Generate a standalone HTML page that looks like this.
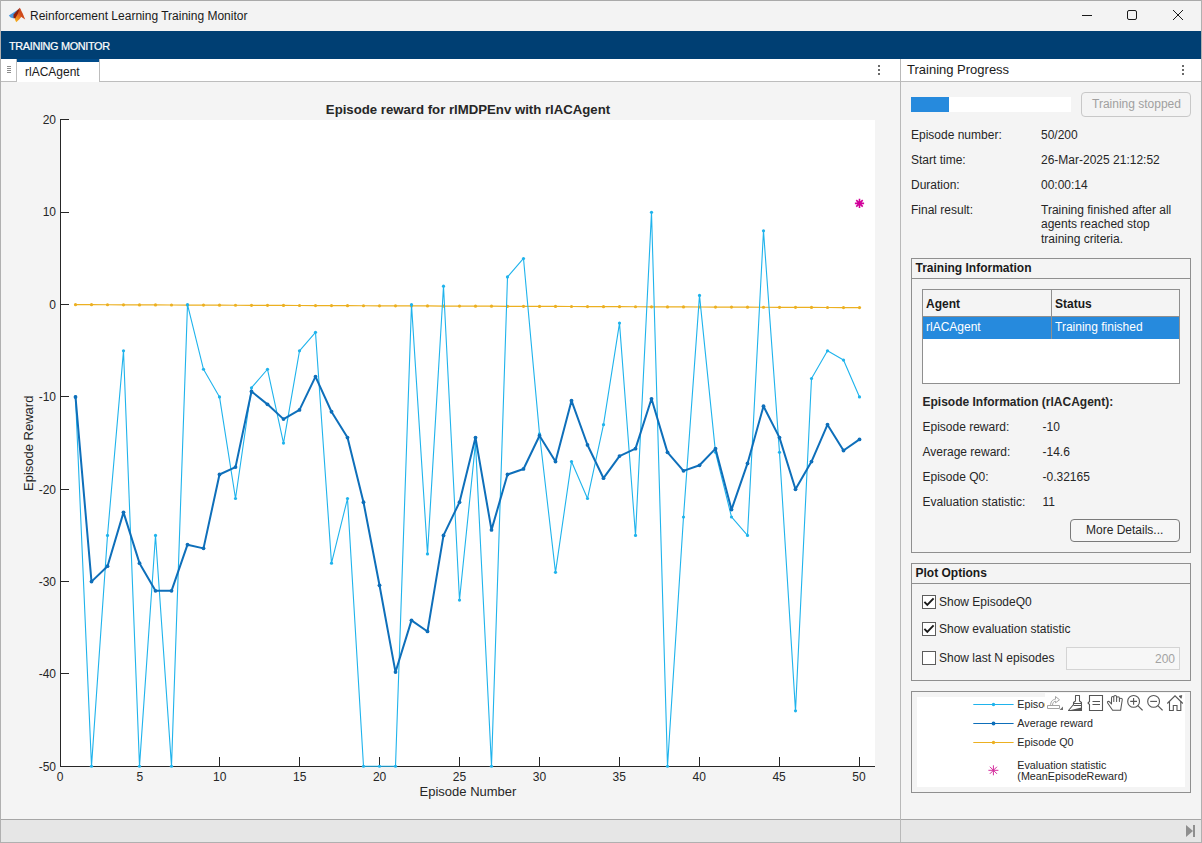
<!DOCTYPE html>
<html><head><meta charset="utf-8">
<style>
html,body{margin:0;padding:0;}
body{width:1202px;height:843px;overflow:hidden;position:relative;background:#f4f4f4;font-family:"Liberation Sans",sans-serif;color:#262626;}
.a{position:absolute;}
.t{position:absolute;white-space:nowrap;font-size:12px;line-height:12px;}
.svg{position:absolute;left:0;top:0;}
</style></head><body>
<!-- title bar -->
<div class="a" style="left:0;top:0;width:1202px;height:31px;background:#f3f3f3;"></div>
<div class="a" style="left:0;top:0;width:1202px;height:1px;background:#a9a9a9;"></div>
<div class="t" style="left:30px;top:10px;font-size:12px;color:#1a1a1a;">Reinforcement Learning Training Monitor</div>
<!-- blue toolstrip -->
<div class="a" style="left:0;top:31px;width:1202px;height:28px;background:#003f73;"></div>
<div class="t" style="left:9px;top:40.5px;font-size:10.9px;line-height:11px;letter-spacing:-0.35px;color:#ffffff;-webkit-text-stroke:0.2px #fff;">TRAINING MONITOR</div>
<!-- left tab strip -->
<div class="a" style="left:0;top:59px;width:900px;height:22px;background:#fff;"></div>
<div class="a" style="left:0;top:81px;width:17px;height:1px;background:#bdbdbd;"></div>
<div class="a" style="left:16px;top:59px;width:1px;height:23px;background:#bdbdbd;"></div>
<div class="a" style="left:7px;top:66px;width:4px;height:1px;background:#8c8c8c;"></div>
<div class="a" style="left:7px;top:68px;width:4px;height:1px;background:#8c8c8c;"></div>
<div class="a" style="left:7px;top:70px;width:4px;height:1px;background:#8c8c8c;"></div>
<div class="a" style="left:7px;top:72px;width:4px;height:1px;background:#8c8c8c;"></div>
<div class="a" style="left:17px;top:59px;width:82px;height:3px;background:#004b8a;"></div>
<div class="a" style="left:17px;top:62px;width:82px;height:20px;background:#fff;"></div>
<div class="t" style="left:25px;top:65.8px;color:#1a1a1a;">rlACAgent</div>
<div class="a" style="left:99px;top:59px;width:1px;height:23px;background:#bdbdbd;"></div>
<div class="a" style="left:99px;top:81px;width:801px;height:1px;background:#bdbdbd;"></div>
<div class="a" style="left:878px;top:65px;width:2px;height:2px;background:#6a6a6a;"></div>
<div class="a" style="left:878px;top:69px;width:2px;height:2px;background:#6a6a6a;"></div>
<div class="a" style="left:878px;top:73px;width:2px;height:2px;background:#6a6a6a;"></div>
<!-- plot -->
<svg class="svg" width="1202" height="843"><rect x="60" y="120" width="815" height="647" fill="#fff"/><path d="M60.5,119V767M60,766.5H875" stroke="#262626" stroke-width="1" fill="none"/><path d="M61,119.5H69M61,212.5H69M61,304.5H69M61,396.5H69M61,489.5H69M61,581.5H69M61,673.5H69M139.5,766V757M219.5,766V757M299.5,766V757M379.5,766V757M459.5,766V757M539.5,766V757M619.5,766V757M699.5,766V757M779.5,766V757M859.5,766V757" stroke="#262626" stroke-width="1" fill="none"/><polyline points="75.50,304.64 91.50,304.70 107.50,304.76 123.50,304.82 139.50,304.88 155.50,304.94 171.50,305.00 187.50,305.06 203.50,305.12 219.50,305.19 235.50,305.25 251.50,305.31 267.50,305.37 283.50,305.43 299.50,305.49 315.50,305.55 331.50,305.61 347.50,305.67 363.50,305.73 379.50,305.79 395.50,305.85 411.50,305.91 427.50,305.97 443.50,306.03 459.50,306.09 475.50,306.16 491.50,306.22 507.50,306.28 523.50,306.34 539.50,306.40 555.50,306.46 571.50,306.52 587.50,306.58 603.50,306.64 619.50,306.70 635.50,306.76 651.50,306.82 667.50,306.88 683.50,306.94 699.50,307.00 715.50,307.06 731.50,307.12 747.50,307.19 763.50,307.25 779.50,307.31 795.50,307.37 811.50,307.43 827.50,307.49 843.50,307.55 859.50,307.61" fill="none" stroke="#ecb021" stroke-width="1.2"/><circle cx="75.50" cy="304.64" r="1.6" fill="#ecb021"/><circle cx="91.50" cy="304.70" r="1.6" fill="#ecb021"/><circle cx="107.50" cy="304.76" r="1.6" fill="#ecb021"/><circle cx="123.50" cy="304.82" r="1.6" fill="#ecb021"/><circle cx="139.50" cy="304.88" r="1.6" fill="#ecb021"/><circle cx="155.50" cy="304.94" r="1.6" fill="#ecb021"/><circle cx="171.50" cy="305.00" r="1.6" fill="#ecb021"/><circle cx="187.50" cy="305.06" r="1.6" fill="#ecb021"/><circle cx="203.50" cy="305.12" r="1.6" fill="#ecb021"/><circle cx="219.50" cy="305.19" r="1.6" fill="#ecb021"/><circle cx="235.50" cy="305.25" r="1.6" fill="#ecb021"/><circle cx="251.50" cy="305.31" r="1.6" fill="#ecb021"/><circle cx="267.50" cy="305.37" r="1.6" fill="#ecb021"/><circle cx="283.50" cy="305.43" r="1.6" fill="#ecb021"/><circle cx="299.50" cy="305.49" r="1.6" fill="#ecb021"/><circle cx="315.50" cy="305.55" r="1.6" fill="#ecb021"/><circle cx="331.50" cy="305.61" r="1.6" fill="#ecb021"/><circle cx="347.50" cy="305.67" r="1.6" fill="#ecb021"/><circle cx="363.50" cy="305.73" r="1.6" fill="#ecb021"/><circle cx="379.50" cy="305.79" r="1.6" fill="#ecb021"/><circle cx="395.50" cy="305.85" r="1.6" fill="#ecb021"/><circle cx="411.50" cy="305.91" r="1.6" fill="#ecb021"/><circle cx="427.50" cy="305.97" r="1.6" fill="#ecb021"/><circle cx="443.50" cy="306.03" r="1.6" fill="#ecb021"/><circle cx="459.50" cy="306.09" r="1.6" fill="#ecb021"/><circle cx="475.50" cy="306.16" r="1.6" fill="#ecb021"/><circle cx="491.50" cy="306.22" r="1.6" fill="#ecb021"/><circle cx="507.50" cy="306.28" r="1.6" fill="#ecb021"/><circle cx="523.50" cy="306.34" r="1.6" fill="#ecb021"/><circle cx="539.50" cy="306.40" r="1.6" fill="#ecb021"/><circle cx="555.50" cy="306.46" r="1.6" fill="#ecb021"/><circle cx="571.50" cy="306.52" r="1.6" fill="#ecb021"/><circle cx="587.50" cy="306.58" r="1.6" fill="#ecb021"/><circle cx="603.50" cy="306.64" r="1.6" fill="#ecb021"/><circle cx="619.50" cy="306.70" r="1.6" fill="#ecb021"/><circle cx="635.50" cy="306.76" r="1.6" fill="#ecb021"/><circle cx="651.50" cy="306.82" r="1.6" fill="#ecb021"/><circle cx="667.50" cy="306.88" r="1.6" fill="#ecb021"/><circle cx="683.50" cy="306.94" r="1.6" fill="#ecb021"/><circle cx="699.50" cy="307.00" r="1.6" fill="#ecb021"/><circle cx="715.50" cy="307.06" r="1.6" fill="#ecb021"/><circle cx="731.50" cy="307.12" r="1.6" fill="#ecb021"/><circle cx="747.50" cy="307.19" r="1.6" fill="#ecb021"/><circle cx="763.50" cy="307.25" r="1.6" fill="#ecb021"/><circle cx="779.50" cy="307.31" r="1.6" fill="#ecb021"/><circle cx="795.50" cy="307.37" r="1.6" fill="#ecb021"/><circle cx="811.50" cy="307.43" r="1.6" fill="#ecb021"/><circle cx="827.50" cy="307.49" r="1.6" fill="#ecb021"/><circle cx="843.50" cy="307.55" r="1.6" fill="#ecb021"/><circle cx="859.50" cy="307.61" r="1.6" fill="#ecb021"/><polyline points="75.50,396.96 91.50,766.24 107.50,535.44 123.50,350.80 139.50,766.24 155.50,535.44 171.50,766.24 187.50,304.64 203.50,369.26 219.50,396.96 235.50,498.51 251.50,387.73 267.50,369.26 283.50,443.12 299.50,350.80 315.50,332.34 331.50,563.14 347.50,498.51 363.50,766.24 379.50,766.24 395.50,766.24 411.50,304.64 427.50,553.90 443.50,286.18 459.50,600.06 475.50,443.12 491.50,766.24 507.50,276.94 523.50,258.48 539.50,433.89 555.50,572.37 571.50,461.58 587.50,498.51 603.50,424.66 619.50,323.10 635.50,535.44 651.50,212.32 667.50,766.24 683.50,516.98 699.50,295.41 715.50,452.35 731.50,516.98 747.50,535.44 763.50,230.78 779.50,452.35 795.50,710.85 811.50,378.50 827.50,350.80 843.50,360.03 859.50,396.96" fill="none" stroke="#1fb3ec" stroke-width="1.1" stroke-linejoin="round"/><circle cx="75.50" cy="396.96" r="1.6" fill="#1fb3ec"/><circle cx="91.50" cy="766.24" r="1.6" fill="#1fb3ec"/><circle cx="107.50" cy="535.44" r="1.6" fill="#1fb3ec"/><circle cx="123.50" cy="350.80" r="1.6" fill="#1fb3ec"/><circle cx="139.50" cy="766.24" r="1.6" fill="#1fb3ec"/><circle cx="155.50" cy="535.44" r="1.6" fill="#1fb3ec"/><circle cx="171.50" cy="766.24" r="1.6" fill="#1fb3ec"/><circle cx="187.50" cy="304.64" r="1.6" fill="#1fb3ec"/><circle cx="203.50" cy="369.26" r="1.6" fill="#1fb3ec"/><circle cx="219.50" cy="396.96" r="1.6" fill="#1fb3ec"/><circle cx="235.50" cy="498.51" r="1.6" fill="#1fb3ec"/><circle cx="251.50" cy="387.73" r="1.6" fill="#1fb3ec"/><circle cx="267.50" cy="369.26" r="1.6" fill="#1fb3ec"/><circle cx="283.50" cy="443.12" r="1.6" fill="#1fb3ec"/><circle cx="299.50" cy="350.80" r="1.6" fill="#1fb3ec"/><circle cx="315.50" cy="332.34" r="1.6" fill="#1fb3ec"/><circle cx="331.50" cy="563.14" r="1.6" fill="#1fb3ec"/><circle cx="347.50" cy="498.51" r="1.6" fill="#1fb3ec"/><circle cx="363.50" cy="766.24" r="1.6" fill="#1fb3ec"/><circle cx="379.50" cy="766.24" r="1.6" fill="#1fb3ec"/><circle cx="395.50" cy="766.24" r="1.6" fill="#1fb3ec"/><circle cx="411.50" cy="304.64" r="1.6" fill="#1fb3ec"/><circle cx="427.50" cy="553.90" r="1.6" fill="#1fb3ec"/><circle cx="443.50" cy="286.18" r="1.6" fill="#1fb3ec"/><circle cx="459.50" cy="600.06" r="1.6" fill="#1fb3ec"/><circle cx="475.50" cy="443.12" r="1.6" fill="#1fb3ec"/><circle cx="491.50" cy="766.24" r="1.6" fill="#1fb3ec"/><circle cx="507.50" cy="276.94" r="1.6" fill="#1fb3ec"/><circle cx="523.50" cy="258.48" r="1.6" fill="#1fb3ec"/><circle cx="539.50" cy="433.89" r="1.6" fill="#1fb3ec"/><circle cx="555.50" cy="572.37" r="1.6" fill="#1fb3ec"/><circle cx="571.50" cy="461.58" r="1.6" fill="#1fb3ec"/><circle cx="587.50" cy="498.51" r="1.6" fill="#1fb3ec"/><circle cx="603.50" cy="424.66" r="1.6" fill="#1fb3ec"/><circle cx="619.50" cy="323.10" r="1.6" fill="#1fb3ec"/><circle cx="635.50" cy="535.44" r="1.6" fill="#1fb3ec"/><circle cx="651.50" cy="212.32" r="1.6" fill="#1fb3ec"/><circle cx="667.50" cy="766.24" r="1.6" fill="#1fb3ec"/><circle cx="683.50" cy="516.98" r="1.6" fill="#1fb3ec"/><circle cx="699.50" cy="295.41" r="1.6" fill="#1fb3ec"/><circle cx="715.50" cy="452.35" r="1.6" fill="#1fb3ec"/><circle cx="731.50" cy="516.98" r="1.6" fill="#1fb3ec"/><circle cx="747.50" cy="535.44" r="1.6" fill="#1fb3ec"/><circle cx="763.50" cy="230.78" r="1.6" fill="#1fb3ec"/><circle cx="779.50" cy="452.35" r="1.6" fill="#1fb3ec"/><circle cx="795.50" cy="710.85" r="1.6" fill="#1fb3ec"/><circle cx="811.50" cy="378.50" r="1.6" fill="#1fb3ec"/><circle cx="827.50" cy="350.80" r="1.6" fill="#1fb3ec"/><circle cx="843.50" cy="360.03" r="1.6" fill="#1fb3ec"/><circle cx="859.50" cy="396.96" r="1.6" fill="#1fb3ec"/><polyline points="75.50,396.96 91.50,581.60 107.50,566.21 123.50,512.36 139.50,563.14 155.50,590.83 171.50,590.83 187.50,544.67 203.50,548.36 219.50,474.51 235.50,467.12 251.50,391.42 267.50,404.35 283.50,419.12 299.50,409.88 315.50,376.65 331.50,411.73 347.50,437.58 363.50,502.20 379.50,585.29 395.50,672.07 411.50,620.37 427.50,631.45 443.50,535.44 459.50,502.20 475.50,437.58 491.50,529.90 507.50,474.51 523.50,468.97 539.50,435.73 555.50,461.58 571.50,400.65 587.50,444.97 603.50,478.20 619.50,456.04 635.50,448.66 651.50,398.81 667.50,452.35 683.50,470.82 699.50,465.28 715.50,448.66 731.50,509.59 747.50,463.43 763.50,406.19 779.50,437.58 795.50,489.28 811.50,461.58 827.50,424.66 843.50,450.51 859.50,439.43" fill="none" stroke="#0e6fba" stroke-width="2.0" stroke-linejoin="round"/><circle cx="75.50" cy="396.96" r="1.9" fill="#0e6fba"/><circle cx="91.50" cy="581.60" r="1.9" fill="#0e6fba"/><circle cx="107.50" cy="566.21" r="1.9" fill="#0e6fba"/><circle cx="123.50" cy="512.36" r="1.9" fill="#0e6fba"/><circle cx="139.50" cy="563.14" r="1.9" fill="#0e6fba"/><circle cx="155.50" cy="590.83" r="1.9" fill="#0e6fba"/><circle cx="171.50" cy="590.83" r="1.9" fill="#0e6fba"/><circle cx="187.50" cy="544.67" r="1.9" fill="#0e6fba"/><circle cx="203.50" cy="548.36" r="1.9" fill="#0e6fba"/><circle cx="219.50" cy="474.51" r="1.9" fill="#0e6fba"/><circle cx="235.50" cy="467.12" r="1.9" fill="#0e6fba"/><circle cx="251.50" cy="391.42" r="1.9" fill="#0e6fba"/><circle cx="267.50" cy="404.35" r="1.9" fill="#0e6fba"/><circle cx="283.50" cy="419.12" r="1.9" fill="#0e6fba"/><circle cx="299.50" cy="409.88" r="1.9" fill="#0e6fba"/><circle cx="315.50" cy="376.65" r="1.9" fill="#0e6fba"/><circle cx="331.50" cy="411.73" r="1.9" fill="#0e6fba"/><circle cx="347.50" cy="437.58" r="1.9" fill="#0e6fba"/><circle cx="363.50" cy="502.20" r="1.9" fill="#0e6fba"/><circle cx="379.50" cy="585.29" r="1.9" fill="#0e6fba"/><circle cx="395.50" cy="672.07" r="1.9" fill="#0e6fba"/><circle cx="411.50" cy="620.37" r="1.9" fill="#0e6fba"/><circle cx="427.50" cy="631.45" r="1.9" fill="#0e6fba"/><circle cx="443.50" cy="535.44" r="1.9" fill="#0e6fba"/><circle cx="459.50" cy="502.20" r="1.9" fill="#0e6fba"/><circle cx="475.50" cy="437.58" r="1.9" fill="#0e6fba"/><circle cx="491.50" cy="529.90" r="1.9" fill="#0e6fba"/><circle cx="507.50" cy="474.51" r="1.9" fill="#0e6fba"/><circle cx="523.50" cy="468.97" r="1.9" fill="#0e6fba"/><circle cx="539.50" cy="435.73" r="1.9" fill="#0e6fba"/><circle cx="555.50" cy="461.58" r="1.9" fill="#0e6fba"/><circle cx="571.50" cy="400.65" r="1.9" fill="#0e6fba"/><circle cx="587.50" cy="444.97" r="1.9" fill="#0e6fba"/><circle cx="603.50" cy="478.20" r="1.9" fill="#0e6fba"/><circle cx="619.50" cy="456.04" r="1.9" fill="#0e6fba"/><circle cx="635.50" cy="448.66" r="1.9" fill="#0e6fba"/><circle cx="651.50" cy="398.81" r="1.9" fill="#0e6fba"/><circle cx="667.50" cy="452.35" r="1.9" fill="#0e6fba"/><circle cx="683.50" cy="470.82" r="1.9" fill="#0e6fba"/><circle cx="699.50" cy="465.28" r="1.9" fill="#0e6fba"/><circle cx="715.50" cy="448.66" r="1.9" fill="#0e6fba"/><circle cx="731.50" cy="509.59" r="1.9" fill="#0e6fba"/><circle cx="747.50" cy="463.43" r="1.9" fill="#0e6fba"/><circle cx="763.50" cy="406.19" r="1.9" fill="#0e6fba"/><circle cx="779.50" cy="437.58" r="1.9" fill="#0e6fba"/><circle cx="795.50" cy="489.28" r="1.9" fill="#0e6fba"/><circle cx="811.50" cy="461.58" r="1.9" fill="#0e6fba"/><circle cx="827.50" cy="424.66" r="1.9" fill="#0e6fba"/><circle cx="843.50" cy="450.51" r="1.9" fill="#0e6fba"/><circle cx="859.50" cy="439.43" r="1.9" fill="#0e6fba"/><path d="M854.90,203.40L864.10,203.40M856.25,200.15L862.75,206.65M859.50,198.80L859.50,208.00M862.75,200.15L856.25,206.65" stroke="#d1009a" stroke-width="1.6" fill="none"/><g font-family="Liberation Sans" font-size="12" fill="#262626"><text x="56" y="123.8" text-anchor="end">20</text><text x="56" y="216.2" text-anchor="end">10</text><text x="56" y="308.7" text-anchor="end">0</text><text x="56" y="401.1" text-anchor="end">-10</text><text x="56" y="493.5" text-anchor="end">-20</text><text x="56" y="586.0" text-anchor="end">-30</text><text x="56" y="678.4" text-anchor="end">-40</text><text x="56" y="770.8" text-anchor="end">-50</text><text x="60.0" y="781" text-anchor="middle">0</text><text x="139.9" y="781" text-anchor="middle">5</text><text x="219.8" y="781" text-anchor="middle">10</text><text x="299.7" y="781" text-anchor="middle">15</text><text x="379.6" y="781" text-anchor="middle">20</text><text x="459.5" y="781" text-anchor="middle">25</text><text x="539.4" y="781" text-anchor="middle">30</text><text x="619.3" y="781" text-anchor="middle">35</text><text x="699.2" y="781" text-anchor="middle">40</text><text x="779.1" y="781" text-anchor="middle">45</text><text x="859.0" y="781" text-anchor="middle">50</text></g><text x="468" y="795.5" text-anchor="middle" font-family="Liberation Sans" font-size="13" fill="#262626">Episode Number</text><text transform="translate(32.6,443.3) rotate(-90)" x="0" y="0" text-anchor="middle" font-family="Liberation Sans" font-size="13" fill="#262626">Episode Reward</text><text x="468" y="114" text-anchor="middle" font-family="Liberation Sans" font-size="13.2" font-weight="bold" fill="#262626">Episode reward for rlMDPEnv with rlACAgent</text></svg>
<!-- divider -->
<div class="a" style="left:900px;top:59px;width:1px;height:784px;background:#b9b9b9;"></div>
<!-- right panel header -->
<div class="a" style="left:901px;top:59px;width:300px;height:22px;background:#fff;"></div>
<div class="a" style="left:901px;top:81px;width:300px;height:1px;background:#bdbdbd;"></div>
<div class="t" style="left:907px;top:63.4px;font-size:13px;line-height:13px;color:#1a1a1a;">Training Progress</div>
<div class="a" style="left:1182px;top:65px;width:2px;height:2px;background:#6a6a6a;"></div>
<div class="a" style="left:1182px;top:69px;width:2px;height:2px;background:#6a6a6a;"></div>
<div class="a" style="left:1182px;top:73px;width:2px;height:2px;background:#6a6a6a;"></div>
<!-- progress -->
<div class="a" style="left:911px;top:97px;width:160px;height:15px;background:#fff;"></div>
<div class="a" style="left:911px;top:97px;width:38px;height:15px;background:#268add;"></div>
<div class="a" style="left:1081px;top:92px;width:108px;height:23px;border:1px solid #c8c8c8;border-radius:4px;background:#f4f4f4;"></div>
<div class="t" style="left:1092px;top:98px;color:#a0a0a0;">Training stopped</div>
<!-- info rows -->
<div class="t" style="left:911px;top:129.2px;">Episode number:</div>
<div class="t" style="left:1041px;top:129.2px;">50/200</div>
<div class="t" style="left:911px;top:154.2px;">Start time:</div>
<div class="t" style="left:1041px;top:154.2px;">26-Mar-2025 21:12:52</div>
<div class="t" style="left:911px;top:179.2px;">Duration:</div>
<div class="t" style="left:1041px;top:179.2px;">00:00:14</div>
<div class="t" style="left:911px;top:204px;">Final result:</div>
<div class="t" style="left:1041px;top:203.5px;">Training finished after all</div>
<div class="t" style="left:1041px;top:218.3px;">agents reached stop</div>
<div class="t" style="left:1041px;top:233.1px;">training criteria.</div>
<!-- Training Information panel -->
<div class="a" style="left:911px;top:258px;width:278px;height:293px;border:1px solid #8f8f8f;"></div>
<div class="a" style="left:912px;top:278px;width:278px;height:1px;background:#8f8f8f;"></div>
<div class="t" style="left:915.5px;top:262px;font-weight:bold;color:#1a1a1a;">Training Information</div>
<div class="a" style="left:922px;top:289px;width:256px;height:93px;border:1px solid #8f8f8f;background:#fff;"></div>
<div class="a" style="left:923px;top:290px;width:256px;height:26px;background:#f4f4f4;"></div>
<div class="a" style="left:923px;top:316px;width:256px;height:1px;background:#8f8f8f;"></div>
<div class="a" style="left:923px;top:317px;width:256px;height:22px;background:#268add;"></div>
<div class="a" style="left:1051px;top:290px;width:1px;height:49px;background:#8f8f8f;"></div>
<div class="t" style="left:926px;top:297.5px;font-weight:bold;color:#1a1a1a;">Agent</div>
<div class="t" style="left:1055px;top:297.5px;font-weight:bold;color:#1a1a1a;">Status</div>
<div class="t" style="left:926px;top:320.8px;color:#fff;">rlACAgent</div>
<div class="t" style="left:1055px;top:320.8px;color:#fff;">Training finished</div>
<div class="t" style="left:922.5px;top:396.2px;font-weight:bold;">Episode Information (rlACAgent):</div>
<div class="t" style="left:922.5px;top:421px;">Episode reward:</div>
<div class="t" style="left:1042.5px;top:421px;">-10</div>
<div class="t" style="left:922.5px;top:446px;">Average reward:</div>
<div class="t" style="left:1042.5px;top:446px;">-14.6</div>
<div class="t" style="left:922.5px;top:471px;">Episode Q0:</div>
<div class="t" style="left:1042.5px;top:471px;">-0.32165</div>
<div class="t" style="left:922.5px;top:496px;">Evaluation statistic:</div>
<div class="t" style="left:1042.5px;top:496px;">11</div>
<div class="a" style="left:1070px;top:519px;width:108px;height:21px;border:1px solid #7a7a7a;border-radius:4px;background:#f6f6f6;"></div>
<div class="t" style="left:1086px;top:524px;">More Details...</div>
<!-- Plot Options -->
<div class="a" style="left:911px;top:563px;width:278px;height:116px;border:1px solid #8f8f8f;"></div>
<div class="a" style="left:912px;top:583px;width:278px;height:1px;background:#8f8f8f;"></div>
<div class="t" style="left:915.5px;top:567px;font-weight:bold;color:#1a1a1a;">Plot Options</div>
<div class="a" style="left:922px;top:595px;width:12px;height:12px;border:1px solid #5c5c5c;background:#fff;"></div>
<div class="a" style="left:922px;top:622px;width:12px;height:12px;border:1px solid #5c5c5c;background:#fff;"></div>
<div class="a" style="left:922px;top:651px;width:12px;height:12px;border:1px solid #5c5c5c;background:#fff;"></div>
<svg class="svg" width="1202" height="843" style="pointer-events:none">
<path d="M924.4,601.8L927.3,604.8L933.6,598.3" stroke="#1a1a1a" stroke-width="1.9" fill="none"/>
<path d="M924.4,628.8L927.3,631.8L933.6,625.3" stroke="#1a1a1a" stroke-width="1.9" fill="none"/>
</svg>
<div class="t" style="left:939px;top:596.3px;">Show EpisodeQ0</div>
<div class="t" style="left:939px;top:623.2px;">Show evaluation statistic</div>
<div class="t" style="left:939px;top:652.1px;">Show last N episodes</div>
<div class="a" style="left:1066px;top:647px;width:112px;height:21px;border:1px solid #d4d4d4;background:#f7f7f7;"></div>
<div class="t" style="left:1155px;top:652.8px;color:#a3a3a3;">200</div>
<!-- legend panel -->
<div class="a" style="left:911px;top:691px;width:278px;height:100px;border:1px solid #8f8f8f;"></div>
<div class="a" style="left:917px;top:697px;width:268px;height:90px;background:#fff;"></div>
<svg class="svg" width="1202" height="843">
<path d="M973.3,704.5H1013.6" stroke="#1fb3ec" stroke-width="1.2"/><circle cx="993.5" cy="704.5" r="1.7" fill="#1fb3ec"/>
<path d="M973.3,723.5H1013.6" stroke="#0e6fba" stroke-width="1.2"/><circle cx="993.5" cy="723.5" r="1.9" fill="#0e6fba"/>
<path d="M973.3,742.5H1013.6" stroke="#ecb021" stroke-width="1.2"/><circle cx="993.5" cy="742.5" r="1.7" fill="#ecb021"/>
<path d="M988.40,770.30L998.40,770.30M989.86,766.76L996.94,773.84M993.40,765.30L993.40,775.30M996.94,766.76L989.86,773.84" stroke="#d42c9c" stroke-width="1" fill="none"/>
<g font-family="Liberation Sans" font-size="10.75" fill="#262626">
<text x="1017.3" y="708.1">Episode reward</text>
<text x="1017.3" y="727.2">Average reward</text>
<text x="1017.3" y="745.8">Episode Q0</text>
<text x="1017.3" y="769.2">Evaluation statistic</text>
<text x="1017.3" y="780.3">(MeanEpisodeReward)</text>
</g>
<rect x="1045" y="693" width="140" height="21" fill="#ffffff"/>
<g stroke="#a3a3a3" stroke-width="1" fill="none" stroke-linejoin="round"><rect x="1047.5" y="705.5" width="12" height="3"/><path d="M1050.5,706C1050.5,701.5 1052.5,699.5 1055.5,699.2V696.5L1059.5,699.8L1055.5,702.8V701.2C1053.5,701.4 1052.5,703 1052.5,705.5"/></g><path d="M1059.5,710L1063,706.5V710Z" fill="#707070"/>
<g stroke="#555555" stroke-width="1.05" fill="none"><path d="M1075.5,695.5H1079.5V701L1081.5,702.5V710.5H1068.5L1073.5,704.5V702.5L1075.5,701Z" stroke-linejoin="round"/><path d="M1073.5,703.5H1081.5M1073.5,705.5H1081.5"/></g><path d="M1068.5,710.5L1081.5,707.5V711H1068.5Z" fill="#555555"/>
<g stroke="#555555" stroke-width="1.1" fill="none"><path d="M1089.5,695.5H1102.5V710.5H1089.5V704.5L1088,703L1089.5,701.5V695.5Z"/><path d="M1092.5,701.5H1100M1092.5,704.5H1100"/></g>
<g stroke="#555555" stroke-width="1.05" fill="none" stroke-linejoin="round" stroke-linecap="round"><path d="M1112.6,710.3L1107.5,702.8C1107,701.8 1108.5,700.8 1109.5,701.8L1111.5,704V698C1111.5,696 1113.8,696 1113.8,698V701.5V697C1113.8,695 1116.6,695 1116.6,697V701.5V698C1116.6,696.2 1119.4,696.2 1119.4,698V701.5V699.5C1119.4,697.8 1122.3,697.8 1122.3,699.5L1120.6,710.3Z"/></g>
<g stroke="#555555" stroke-width="1.1" fill="none"><circle cx="1133.6" cy="701.4" r="5.9"/><path d="M1137.8,705.6L1142.6,710.4" stroke-width="1.3"/><path d="M1130.2,701.4H1137M1133.6,698V704.8"/></g>
<g stroke="#555555" stroke-width="1.1" fill="none"><circle cx="1153.6" cy="701.4" r="5.9"/><path d="M1157.8,705.6L1162.6,710.4" stroke-width="1.3"/><path d="M1150.2,701.4H1157"/></g>
<g stroke="#555555" stroke-width="1.1" fill="none" stroke-linejoin="miter"><path d="M1167.3,703.5L1175,695.8L1182.8,703.5"/><path d="M1169.5,701.5V710.5H1173.3V705.5H1177V710.5H1180.8V701.5"/></g><path d="M1179,696.2L1181.8,695.5L1181.2,698.3Z" fill="#555555" stroke="#555555" stroke-width="0.8"/>
</svg>
<!-- status bar -->
<div class="a" style="left:0;top:819px;width:1202px;height:24px;background:#e6e6e6;"></div>
<div class="a" style="left:0;top:819px;width:1202px;height:1px;background:#a6a6a6;"></div>
<div class="a" style="left:900px;top:819px;width:1px;height:24px;background:#b9b9b9;"></div>
<!-- window borders -->
<div class="a" style="left:0;top:0;width:1px;height:843px;background:#b0b0b0;"></div>
<div class="a" style="left:1201px;top:0;width:1px;height:843px;background:#b0b0b0;"></div>
<svg class="svg" width="1202" height="843">
<defs><linearGradient id="mg" x1="0" y1="1" x2="0.3" y2="0"><stop offset="0" stop-color="#f7c021"/><stop offset="0.55" stop-color="#ea6d1f"/><stop offset="1" stop-color="#b8341a"/></linearGradient></defs>
<path d="M8.8,15.6L13.5,12.6L18.2,9.4L16.2,14.2L13.8,18.6L10.6,17.4Z" fill="#4a98de"/>
<path d="M13.6,14.6L17.4,10.3L19.8,7.8L18.6,14.8L16.4,19.8L13.4,17.6Z" fill="#8e1f0c"/>
<path d="M16.2,22.2L14.8,19.2L18,13.4L19.8,7.8L21.2,12L21.8,16.2L19.2,19.4Z" fill="url(#mg)"/>
<path d="M19.8,7.8L22.6,13.2L25.2,19.6L22.2,17.6L20.6,16.2Z" fill="#cf4a1c"/>
<path d="M1082,15.5H1092" stroke="#1a1a1a" stroke-width="1"/>
<rect x="1127.5" y="10.5" width="9" height="9" rx="1.5" stroke="#1a1a1a" stroke-width="1" fill="none"/>
<path d="M1173,10L1183,20M1183,10L1173,20" stroke="#1a1a1a" stroke-width="1"/>
<path d="M1186,825L1193,831L1186,837Z" fill="#8f8f8f"/><rect x="1193" y="825" width="2" height="12" fill="#8f8f8f"/>
<rect x="0" y="842" width="1202" height="1" fill="#b0b0b0"/>
</svg>
</body></html>
